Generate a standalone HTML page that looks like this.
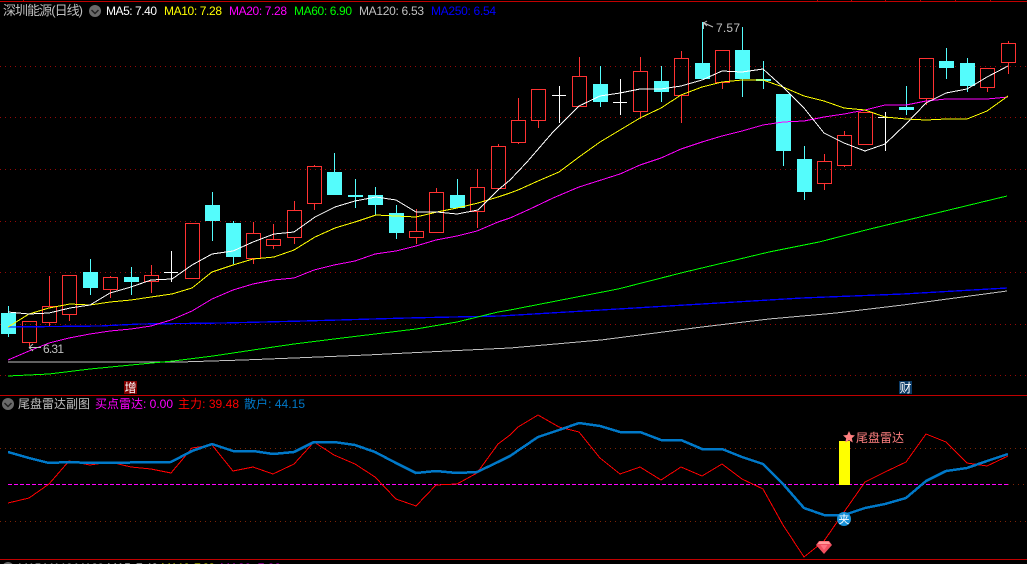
<!DOCTYPE html>
<html lang="zh">
<head>
<meta charset="utf-8">
<title>深圳能源 K线</title>
<style>
html,body{margin:0;padding:0;background:#000;width:1027px;height:564px;overflow:hidden}
svg{display:block;position:absolute;left:0;top:0}
text{font-family:"Liberation Sans","Noto Sans CJK SC",sans-serif;font-size:12px}
.l{fill:none;shape-rendering:crispEdges}
</style>
</head>
<body>
<svg width="1027" height="564" viewBox="0 0 1027 564" xmlns="http://www.w3.org/2000/svg">
<rect width="1027" height="564" fill="#000"/>
<!-- frame -->
<g fill="#c00000" shape-rendering="crispEdges">
<rect x="0" y="1" width="1027" height="1"/>
<rect x="0" y="395" width="1027" height="1"/>
<rect x="0" y="559" width="1027" height="1"/>
<rect x="23" y="0" width="1" height="2"/>
<rect x="817" y="0" width="1" height="2"/>
<rect x="851" y="0" width="1" height="2"/>
<rect x="885" y="0" width="1" height="2"/>
<rect x="920" y="0" width="1" height="2"/>
<rect x="955" y="0" width="1" height="2"/>
<rect x="990" y="0" width="1" height="2"/>
</g>
<!-- grid -->
<g class="l" stroke="#960808" stroke-dasharray="1 4">
<path d="M0 66.5H1027M0 117.5H1027M0 169.5H1027M0 221.5H1027M0 272.5H1027M0 324.5H1027M0 375.5H1027"/>
</g>
<g class="l" stroke="#7c2408" stroke-dasharray="1 4">
<path d="M0 448.5H1027M0 521.5H1027M1008 484.5H1027"/>
</g>
<!-- red candles -->
<path class="l" stroke="#ff3232" d="
M22.5 321.5h14v21h-14zM29.5 343V346
M42.5 306.5h14v16h-14zM49.5 276V306M49.5 323V326
M62.5 275.5h14v39h-14zM69.5 315V321
M103.5 277.5h14v12h-14zM110.5 276V277M110.5 290V298
M144.5 275.5h14v6h-14zM151.5 265V275M151.5 282V293
M185.5 223.5h14v55h-14z
M246.5 233.5h14v25h-14zM253.5 222V233M253.5 259V264
M266.5 239.5h14v6h-14zM273.5 224V239M273.5 246V249
M287.5 210.5h14v27h-14zM294.5 201V210M294.5 238V244
M307.5 166.5h14v37h-14zM314.5 165V166M314.5 204V210
M409.5 231.5h14v6h-14zM416.5 209V231M416.5 238V244
M429.5 192.5h14v40h-14zM436.5 188V192
M470.5 187.5h14v24h-14zM477.5 169V187M477.5 212V228
M491.5 146.5h14v42h-14zM498.5 144V146
M511.5 120.5h14v22h-14zM518.5 98V120M518.5 143V144
M531.5 89.5h14v31h-14zM538.5 121V128
M572.5 76.5h14v30h-14zM579.5 57V76
M633.5 71.5h14v40h-14zM640.5 57V71M640.5 112V119
M674.5 58.5h14v37h-14zM681.5 51V58M681.5 96V123
M715.5 50.5h14v32h-14zM722.5 83V89
M817.5 161.5h14v22h-14zM824.5 154V161M824.5 184V190
M837.5 135.5h14v30h-14zM844.5 131V135M844.5 166V167
M858.5 112.5h14v32h-14z
M919.5 58.5h14v40h-14zM926.5 99V105
M980.5 68.5h14v19h-14zM987.5 88V92
M1001.5 43.5h14v19h-14zM1008.5 41V43M1008.5 63V74"/>
<!-- cyan candles -->
<g fill="#54fcfc" shape-rendering="crispEdges">
<path class="l" stroke="#54fcfc" d="M8.5 306V337M90.5 259V295M131.5 267V295M212.5 192V241M233.5 221V264M334.5 153V195M355.5 179V208M375.5 187V215M396.5 205V239M457.5 179V208M600.5 66V107M661.5 66V102M702.5 22V79M742.5 27V97M763.5 61V89M783.5 94V166M804.5 146V200M906.5 86V115M946.5 48V79M967.5 58V92"/>
<rect x="1" y="313" width="15" height="21"/>
<rect x="83" y="272" width="15" height="16"/>
<rect x="124" y="277" width="15" height="5"/>
<rect x="205" y="205" width="15" height="16"/>
<rect x="226" y="223" width="15" height="34"/>
<rect x="327" y="172" width="15" height="23"/>
<rect x="348" y="195" width="15" height="2"/>
<rect x="368" y="195" width="15" height="10"/>
<rect x="389" y="213" width="15" height="20"/>
<rect x="450" y="195" width="15" height="13"/>
<rect x="593" y="84" width="15" height="18"/>
<rect x="654" y="81" width="15" height="11"/>
<rect x="695" y="63" width="15" height="16"/>
<rect x="735" y="50" width="15" height="29"/>
<rect x="756" y="79" width="15" height="2"/>
<rect x="776" y="94" width="15" height="57"/>
<rect x="797" y="159" width="15" height="33"/>
<rect x="899" y="107" width="15" height="3"/>
<rect x="939" y="61" width="15" height="7"/>
<rect x="960" y="63" width="15" height="23"/>
</g>
<!-- doji -->
<path class="l" stroke="#fff" d="M171.5 251V282M164 272.5H178M559.5 86V123M552 95.5H566M620.5 79V115M613 102.5H627M885.5 112V151M878 117.5H892"/>
<!-- MA lines -->
<g stroke-width="1">
<polyline class="l" stroke="#c0c0c0" points="8,362 180,362 243,360 294,358 367,355 447,351 510,348 601,340 702,327 769,319 836,313 903,305 1007,291"/>
<polyline class="l" stroke="#0000ff" stroke-width="1.3" points="8,327 100,326 140,324 223,323 304,321 407,318 500,316 601,310 702,304 802,298 903,294 1007,288"/>
<polyline class="l" stroke="#00ff00" points="8,376 49,374 90,369 131,365 173,361 213,356 253,350 294,344 334,339 375,334 416,329 457,322 498,312 510,310 618,289 685,272 769,252 819,242 870,229 920,217 1007,196"/>
<polyline class="l" stroke="#ff00ff" points="8,360 29,351 49,343 69,338 90,334 110,331 131,329 151,326 171,320 192,311 212,299 233,290 253,284 273,280 294,278 314,270 334,265 355,261 375,254 396,251 416,246 436,240 457,236 477,231 498,222 510,218 530,209 553,198 579,187 620,174 640,165 661,158 681,149 702,142 722,136 742,131 763,125 783,122 804,121 824,117 844,114 865,110 885,105 906,105 926,101 946,99 967,99 987,99 1008,97"/>
<polyline class="l" stroke="#ffff00" points="8,327 29,314 49,308 70,304 90,305 110,302 131,300 151,297 172,294 192,288 212,272 233,265 253,259 274,257 294,250 315,237 335,228 355,222 376,215 396,216 416,217 437,212 457,208 478,203 498,197 510,193 518,190 538,181 559,172 579,157 600,142 620,130 640,118 661,108 681,95 702,87 722,82 742,80 763,80 783,87 804,96 824,101 844,108 865,110 885,117 906,119 926,120 946,119 967,119 987,111 1008,96"/>
<polyline class="l" stroke="#ffffff" points="8,312 29,314 49,313 70,308 90,305 110,293 131,287 151,280 172,279 192,265 212,254 233,251 253,242 274,234 294,232 315,217 335,207 355,201 376,197 396,200 416,212 437,212 457,214 478,210 498,190 510,180 527,162 553,132 579,106 600,96 620,93 640,89 661,89 681,86 702,80 722,71 742,72 763,69 783,87 804,108 824,133 844,143 865,151 885,144 906,124 926,103 946,93 967,89 987,77 1008,66"/>
</g>
<!-- high/low labels -->
<path fill="none" stroke="#c0c0c0" d="M703.5 22V29M703.5 23L707 21M703.5 23L707 26M704 23L713 27"/>
<text x="716" y="32" fill="#c0c0c0" textLength="24" lengthAdjust="spacing">7.57</text>
<path fill="none" stroke="#c0c0c0" d="M29 347.5H41M29 347.5L33 344M29 347.5L33 351"/>
<text x="43" y="353" fill="#c0c0c0" textLength="21" lengthAdjust="spacing">6.31</text>
<!-- header -->
<text x="3" y="15" fill="#c0c0c0" style="font-size:13px" textLength="80" lengthAdjust="spacing">深圳能源(日线)</text>
<circle cx="95" cy="11" r="6" fill="#6a6a6a"/>
<path d="M91.5 10L95 13.5L98.5 10" fill="none" stroke="#222" stroke-width="1.5"/>
<text x="106" y="15" fill="#ffffff" textLength="51" lengthAdjust="spacing">MA5: 7.40</text>
<text x="164" y="15" fill="#ffff00" textLength="58" lengthAdjust="spacing">MA10: 7.28</text>
<text x="229" y="15" fill="#ff00ff" textLength="58" lengthAdjust="spacing">MA20: 7.28</text>
<text x="294" y="15" fill="#00ff00" textLength="58" lengthAdjust="spacing">MA60: 6.90</text>
<text x="359" y="15" fill="#c0c0c0" textLength="65" lengthAdjust="spacing">MA120: 6.53</text>
<text x="431" y="15" fill="#0000ff" textLength="65" lengthAdjust="spacing">MA250: 6.54</text>
<!-- flags -->
<rect x="124" y="381" width="13" height="13" fill="#800000"/>
<text x="124.5" y="392" fill="#fff">增</text>
<rect x="899" y="381" width="13" height="13" fill="#0a3a66"/>
<text x="899.5" y="392" fill="#fff">财</text>
<!-- sub-chart -->
<circle cx="8" cy="404" r="6" fill="#6a6a6a"/>
<path d="M4.5 403L8 406.5L11.5 403" fill="none" stroke="#222" stroke-width="1.5"/>
<text x="18" y="408" fill="#c0c0c0" textLength="72" lengthAdjust="spacing">尾盘雷达副图</text>
<text x="95" y="408" fill="#ff00ff" textLength="78" lengthAdjust="spacing">买点雷达: 0.00</text>
<text x="178" y="408" fill="#ff0000" textLength="61" lengthAdjust="spacing">主力: 39.48</text>
<text x="244" y="408" fill="#0078c8" textLength="61" lengthAdjust="spacing">散户: 44.15</text>
<path class="l" stroke="#ff00ff" stroke-dasharray="4 2" d="M8 484.5H1008"/>
<rect x="839" y="441" width="11" height="44" fill="#ffff00"/>
<polyline class="l" stroke="#ff0000" points="8,503 29,498 49,484 69,461 90,465 110,462 131,467 151,469 171,473 192,448 212,445 233,471 253,467 273,474 294,464 314,442 334,455 355,464 375,477 396,499 416,506 436,485 457,484 477,473 498,444 510,435 518,427 538,415 559,427 579,432 600,458 620,474 640,467 661,480 681,467 702,476 722,464 742,479 763,489 783,525 804,557 824,541 844,512 865,482 885,472 906,462 926,434 946,442 967,463 987,466 1008,456"/>
<polyline class="l" stroke="#0078c8" stroke-width="2.5" points="8,452 29,458 49,463 69,462 90,463 171,462 192,451 212,444 233,451 253,451 273,454 294,452 314,442 334,442 355,445 375,452 396,463 416,473 436,471 457,473 477,472 498,462 510,456 538,437 559,430 579,423 600,426 620,432 640,432 661,440 681,440 702,449 722,449 742,457 763,464 783,484 804,508 824,515 844,515 865,508 885,504 906,498 926,481 946,471 967,468 987,461 1008,454"/>
<!-- star + label -->
<polygon points="849,431 850.8,435 855,435.4 851.8,438.2 852.8,442.5 849,440.2 845.2,442.5 846.2,438.2 843,435.4 847.2,435" fill="#ff8080"/>
<text x="856" y="442" fill="#ff8080">尾盘雷达</text>
<!-- buy marker -->
<circle cx="844" cy="519" r="7" fill="#1a92d8"/>
<text x="838.5" y="523" fill="#fff" style="font-size:11px">夹</text>
<!-- diamond -->
<polygon points="819,541 829,541 832,545 824,554 816,545" fill="#f05060"/>
<polygon points="819.5,541.5 828.5,541.5 830.5,544 817.5,544" fill="#ff9a9a"/>
<polygon points="820.5,545 827.5,545 824,550" fill="#ff7080"/>
<!-- bottom cut-off panel -->
<circle cx="8" cy="568" r="6" fill="#6a6a6a"/>
<text x="18" y="572" fill="#c0c0c0" textLength="86" lengthAdjust="spacing">MA5 MA10 MA20</text>
<text x="107" y="572" fill="#ffffff" textLength="51" lengthAdjust="spacing">MA5: 7.40</text>
<text x="161" y="572" fill="#ffff00" textLength="54" lengthAdjust="spacing">MA10: 7.28</text>
<text x="220" y="572" fill="#ff00ff" textLength="61" lengthAdjust="spacing">MA20: 7.28</text>
</svg>
</body>
</html>
